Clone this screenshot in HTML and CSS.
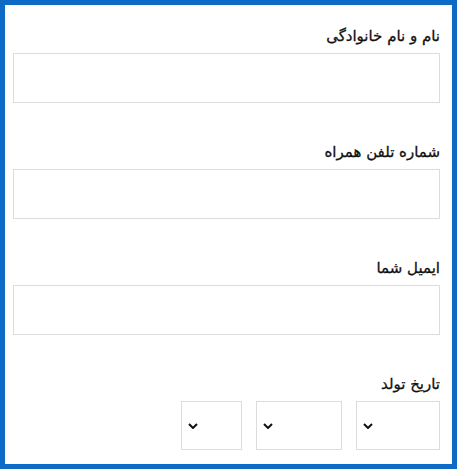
FILE: index.html
```html
<!DOCTYPE html>
<html lang="fa" dir="rtl">
<head>
<meta charset="utf-8">
<link rel="stylesheet" href="styles.css">
</head>
<body>
<form class="form">
  <div class="field">
    <label class="label">نام و نام خانوادگی</label>
    <div class="input"></div>
  </div>
  <div class="field">
    <label class="label">شماره تلفن همراه</label>
    <div class="input"></div>
  </div>
  <div class="field">
    <label class="label">ایمیل شما</label>
    <div class="input"></div>
  </div>
  <div class="field">
    <label class="label">تاریخ تولد</label>
    <div class="selects">
      <div class="select day"><svg class="chev" width="10" height="6" viewBox="0 0 10 6"><path d="M1 1 L5 5 L9 1" fill="none" stroke="#111" stroke-width="2"/></svg></div>
      <div class="select month"><svg class="chev" width="10" height="6" viewBox="0 0 10 6"><path d="M1 1 L5 5 L9 1" fill="none" stroke="#111" stroke-width="2"/></svg></div>
      <div class="select year"><svg class="chev" width="10" height="6" viewBox="0 0 10 6"><path d="M1 1 L5 5 L9 1" fill="none" stroke="#111" stroke-width="2"/></svg></div>
    </div>
  </div>
</form>
</body>
</html>
```
FILE: styles.css
```css
html, body { margin: 0; padding: 0; }
body {
  width: 457px;
  height: 469px;
  box-sizing: border-box;
  border: 5px solid #0d6ac5;
  background: #fff;
  font-family: "DejaVu Sans", sans-serif;
  color: #111;
  overflow: hidden;
}
.form {
  padding: 20px 12px 0 8px;
  display: flex;
  flex-direction: column;
  gap: 38px;
}
.field { display: flex; flex-direction: column; }
.label {
  font-size: 15px;
  font-weight: normal;
  -webkit-text-stroke: 0.3px #111;
  line-height: 22px;
  height: 22px;
  margin-bottom: 6px;
}
.input {
  height: 48px;
  border: 1px solid #dcdcdc;
}
.selects { display: flex; gap: 14px; }
.select {
  height: 49px;
  border: 1px solid #dcdcdc;
  display: flex;
  align-items: center;
  justify-content: flex-end;
  padding-left: 6px;
  box-sizing: border-box;
}
.select.day { width: 84px; }
.select.month { width: 86px; }
.select.year { width: 61px; }
.chev { display: block; }
```
